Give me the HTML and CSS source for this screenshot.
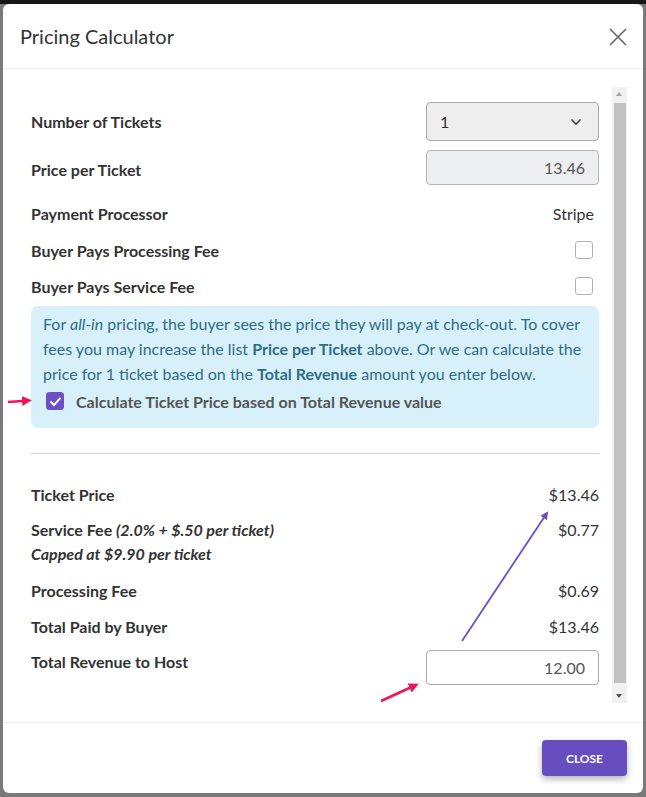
FILE: index.html
```html
<!DOCTYPE html>
<html>
<head>
<meta charset="utf-8">
<link rel="stylesheet" href="styles.css">
</head>
<body>
<div class="topband"></div>
<div class="modal">
  <div class="modal-header">
    <h1 class="title">Pricing Calculator</h1>
    <svg class="x-icon" width="18" height="18" viewBox="0 0 18 18"><path d="M1 1L17 17M17 1L1 17" stroke="#666" stroke-width="1.6" fill="none"/></svg>
  </div>
  <div class="modal-body">
    <div class="scroller">
      <div class="content">
        <div class="row row-select">
          <span class="label">Number of Tickets</span>
          <div class="select"><span>1</span>
            <svg width="12" height="8" viewBox="0 0 12 8"><path d="M1.5 1.5L6 6L10.5 1.5" stroke="#444" stroke-width="1.6" fill="none"/></svg>
          </div>
        </div>
        <div class="row row-input">
          <span class="label low">Price per Ticket</span>
          <div class="input disabled">13.46</div>
        </div>
        <div class="row row-std first-std">
          <span class="label">Payment Processor</span>
          <span class="value inset">Stripe</span>
        </div>
        <div class="row row-std">
          <span class="label">Buyer Pays Processing Fee</span>
          <span class="checkbox"></span>
        </div>
        <div class="row row-std">
          <span class="label">Buyer Pays Service Fee</span>
          <span class="checkbox"></span>
        </div>
        <div class="info">
          <p class="info-text">For <em>all-in</em> pricing, the buyer sees the price they will pay at check-out. To cover fees you may increase the list <strong>Price per Ticket</strong> above. Or we can calculate the price for 1 ticket based on the <strong>Total Revenue</strong> amount you enter below.</p>
          <div class="check-row">
            <span class="checkbox checked"><svg width="13" height="11" viewBox="0 0 13 11"><path d="M1.5 5.5L5 9L11.5 1.8" stroke="#fff" stroke-width="2" fill="none"/></svg></span>
            <span class="check-label">Calculate Ticket Price based on Total Revenue value</span>
          </div>
        </div>
        <hr class="divider">
        <div class="row row-std">
          <span class="label">Ticket Price</span>
          <span class="value">$13.46</span>
        </div>
        <div class="row row-fee">
          <span class="label">Service Fee <em>(2.0% + $.50 per ticket)</em><br><em>Capped at $9.90 per ticket</em></span>
          <span class="value">$0.77</span>
        </div>
        <div class="row row-std">
          <span class="label">Processing Fee</span>
          <span class="value">$0.69</span>
        </div>
        <div class="row row-std">
          <span class="label">Total Paid by Buyer</span>
          <span class="value">$13.46</span>
        </div>
        <div class="row row-rev">
          <span class="label">Total Revenue to Host</span>
          <div class="input">12.00</div>
        </div>
      </div>
      <div class="scrollbar">
        <div class="sb-arrow up"></div>
        <div class="sb-thumb"></div>
        <div class="sb-arrow down"></div>
      </div>
    </div>
  </div>
  <div class="modal-footer">
    <button class="btn-close">CLOSE</button>
  </div>
</div>
<svg class="annot" width="646" height="797" viewBox="0 0 646 797">
  <defs>
    <marker id="hp" markerWidth="10" markerHeight="10" refX="7" refY="5" orient="auto" markerUnits="userSpaceOnUse">
      <path d="M0 0L10 5L0 10Z" fill="#f0145a"/>
    </marker>
    <marker id="hv" markerWidth="8" markerHeight="8" refX="6" refY="4" orient="auto" markerUnits="userSpaceOnUse">
      <path d="M0 0L8 4L0 8Z" fill="#6a50c8"/>
    </marker>
  </defs>
  <line x1="8" y1="402" x2="29" y2="400.5" stroke="#f0145a" stroke-width="2.4" marker-end="url(#hp)"/>
  <line x1="462" y1="641" x2="547" y2="513" stroke="#6a50c8" stroke-width="1.8" marker-end="url(#hv)"/>
  <line x1="381" y1="701" x2="416" y2="685" stroke="#f0145a" stroke-width="2.8" marker-end="url(#hp)"/>
</svg>
</body>
</html>
```
FILE: styles.css
```css
* { box-sizing: border-box; }
html, body { margin: 0; padding: 0; }
body {
  width: 646px;
  height: 797px;
  background: #7a7a7a;
  font-family: Lato, "Open Sans", sans-serif;
  color: #333;
  position: relative;
  overflow: hidden;
}
.topband {
  height: 4px;
  background: #161616;
}
.modal {
  margin-left: 3px;
  width: 640px;
  height: 789px;
  background: #fff;
  border-radius: 6px;
  display: flex;
  flex-direction: column;
}
.modal-header {
  height: 65px;
  border-bottom: 1px solid #eceeef;
  display: flex;
  align-items: center;
  justify-content: space-between;
  padding: 0 16px 0 17px;
}
.title {
  margin: 0;
  font-size: 20px;
  font-weight: 400;
  color: #333;
}
.x-icon { margin-top: 1px; }
.modal-body {
  height: 654px;
  padding: 18px 16px 19px 16px;
  border-bottom: 1px solid #eceeef;
}
.scroller {
  display: flex;
  height: 616px;
}
.content {
  flex: 1;
  padding: 15px 13px 0 12px;
}
.row {
  display: flex;
  justify-content: space-between;
  align-items: center;
  font-size: 16px;
}
.label { font-weight: 700; color: #333; }
.label.low { padding-top: 4px; }
.value { color: #333; }
.value.inset { margin-right: 5px; }
.row-select { height: 39px; margin-bottom: 9px; }
.row-input { height: 35px; margin-bottom: 11px; }
.row-std { height: 36px; }
.first-std { padding-bottom: 1px; }
.select {
  width: 173px;
  height: 39px;
  background: #eeeeee;
  border: 1px solid #a9a9a9;
  border-radius: 4px;
  display: flex;
  align-items: center;
  justify-content: space-between;
  padding: 0 16px 0 13px;
  font-size: 16px;
  color: #333;
}
.input {
  width: 173px;
  height: 35px;
  border: 1px solid #aaa;
  border-radius: 4px;
  display: flex;
  align-items: center;
  justify-content: flex-end;
  padding: 0 13px;
  font-size: 16px;
  color: #555;
  background: #fff;
}
.input.disabled { background: #eceef0; border-color: #b4b4b4; }
.checkbox {
  width: 18px;
  height: 18px;
  border: 1.5px solid #b2b2b2;
  border-radius: 3px;
  margin-right: 6px;
  display: inline-flex;
  align-items: center;
  justify-content: center;
  background: #fff;
}
.checkbox.checked {
  background: #6c4fc4;
  border-color: #6c4fc4;
  margin-right: 0;
}
.info {
  margin-top: 2px;
  background: #d8f0fa;
  border-radius: 7px;
  padding: 5px 12px 15px 12px;
  color: #2e6e87;
  font-size: 16px;
}
.info-text {
  margin: 0;
  line-height: 25px;
}
.info-text strong { font-weight: 700; }
.check-row {
  display: flex;
  align-items: center;
  height: 24px;
  margin-top: 3px;
  padding-left: 3px;
}
.check-label {
  margin-left: 12px;
  font-weight: 700;
  color: #555;
}
.divider {
  margin: 25px 0 22px 0;
  border: 0;
  border-top: 1px solid #cfcfcf;
  height: 0;
}
.row-fee {
  align-items: flex-start;
  padding: 6px 0;
  line-height: 24px;
}
.row-fee em { font-weight: 700; }
.row-rev {
  align-items: flex-start;
  padding-top: 6px;
  line-height: 24px;
}
.scrollbar {
  width: 15px;
  background: #f1f1f1;
  display: flex;
  flex-direction: column;
  align-items: center;
}
.sb-arrow {
  width: 15px;
  height: 15px;
  position: relative;
}
.sb-arrow.up::after, .sb-arrow.down::after {
  content: "";
  position: absolute;
  left: 4px;
  width: 0;
  height: 0;
  border-left: 3.5px solid transparent;
  border-right: 3.5px solid transparent;
}
.sb-arrow.up::after { top: 5px; border-bottom: 4px solid #a3a3a3; }
.sb-arrow.down::after { top: 6px; border-top: 4px solid #505050; }
.sb-thumb {
  flex: 1;
  width: 12px;
  background: #c1c1c1;
  margin: 1px 0 5px 0;
}
.modal-footer {
  flex: 1;
  display: flex;
  justify-content: flex-end;
  align-items: flex-start;
  padding: 17px 16px 0 0;
}
.btn-close {
  width: 85px;
  height: 36px;
  background: #674ec0;
  color: #fff;
  border: 0;
  border-radius: 4px;
  font-family: Lato, sans-serif;
  font-size: 12px;
  font-weight: 700;
  box-shadow: 0 3px 7px rgba(0,0,0,0.3);
}
.annot {
  position: absolute;
  left: 0;
  top: 0;
  pointer-events: none;
}
```
